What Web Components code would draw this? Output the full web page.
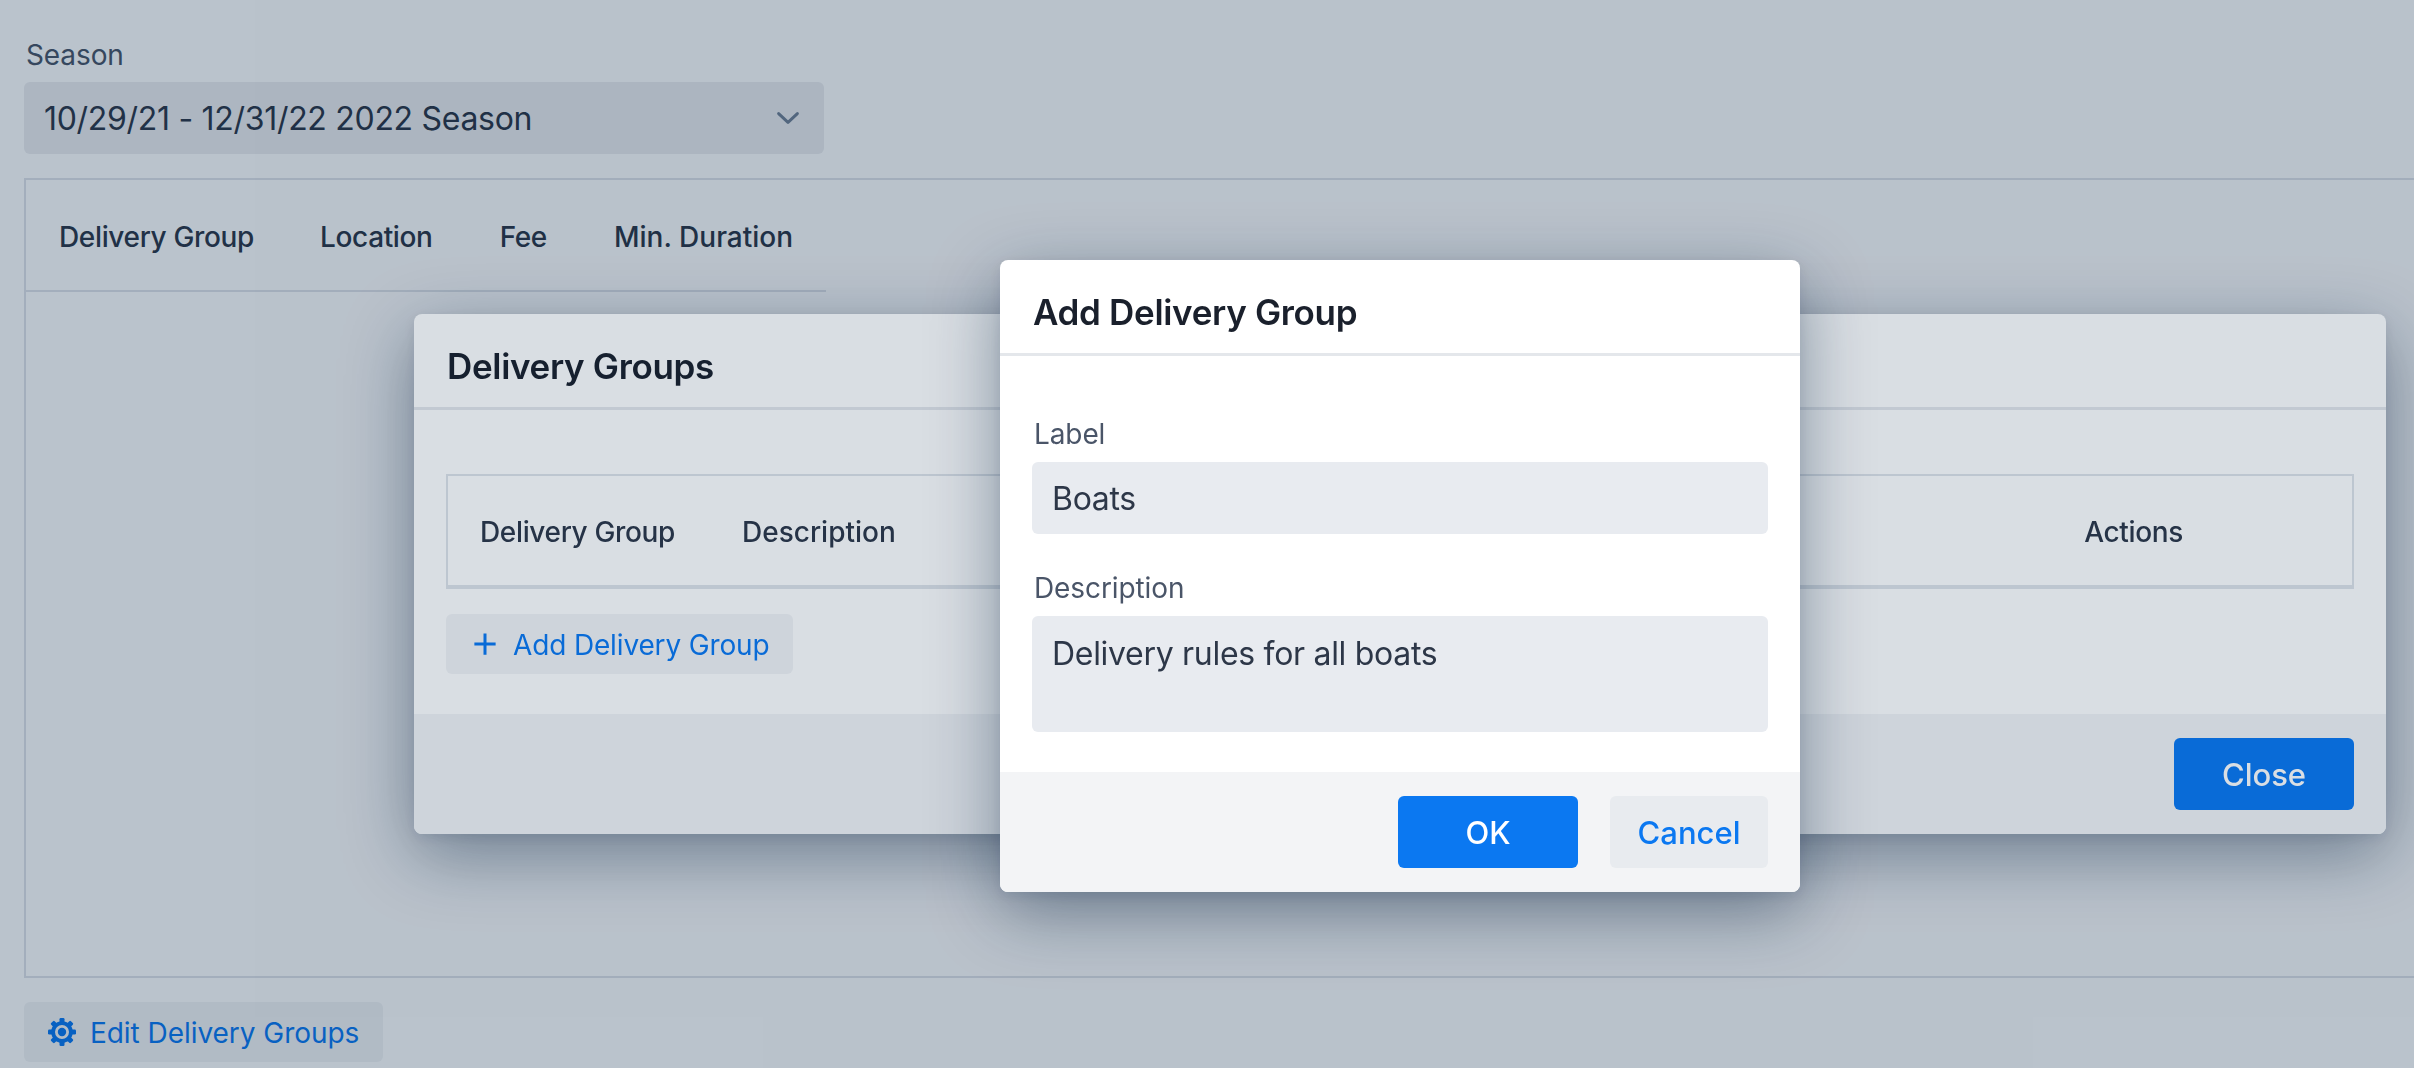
<!DOCTYPE html>
<html>
<head>
<meta charset="utf-8">
<title>Delivery Groups</title>
<style>
	html, body { margin: 0; height: 100%; background: #fff; overflow: hidden; }
	body { font-family: Inter, "Noto Sans", sans-serif; color: #2d3748; }
</style>
</head>
<body>
<season-page>
	<field-select slot="select" label="Season" value="10/29/21 - 12/31/22 2022 Season"></field-select>
	<data-table slot="table">
		<span>Delivery Group</span><span>Location</span><span>Fee</span><span>Min. Duration</span>
	</data-table>
	<action-button slot="edit" icon="cog">Edit Delivery Groups</action-button>
</season-page>

<modal-layer>
	<modal-box heading="Delivery Groups" style="--w:1972px;--top:314px;--gap:64px;">
		<group-list>
			<action-button slot="add" icon="plus">Add Delivery Group</action-button>
		</group-list>
		<solid-button slot="footer" kind="primary">Close</solid-button>
	</modal-box>
</modal-layer>

<modal-layer>
	<modal-box heading="Add Delivery Group" style="--w:800px;--top:260px;--gap:59px;">
		<text-field label="Label" value="Boats"></text-field>
		<text-field label="Description" value="Delivery rules for all boats" multi></text-field>
		<solid-button slot="footer" kind="primary">OK</solid-button>
		<solid-button slot="footer" kind="ghost">Cancel</solid-button>
	</modal-box>
</modal-layer>

<script>
const teeth = [0, 45, 90, 135, 180, 225, 270, 315]
	.map((a) => `<rect x="11.5" y="0" width="5" height="6" rx="1.2" transform="rotate(${a} 14 14)"/>`)
	.join("");

const ICONS = {
	chevron: `<svg viewBox="0 0 24 24" width="30" height="30" fill="none" stroke="currentColor" stroke-width="2.4" stroke-linecap="round" stroke-linejoin="round"><path d="M4.5 8.5l7.5 7 7.5-7"/></svg>`,
	plus: `<svg viewBox="0 0 24 24" width="30" height="30" fill="none" stroke="currentColor" stroke-width="2.4"><path d="M12 3.5v17M3.5 12h17"/></svg>`,
	cog: `<svg viewBox="0 0 28 28" width="28" height="28" fill="currentColor">${teeth}<circle cx="14" cy="14" r="8.9" fill="none" stroke="currentColor" stroke-width="3.8"/><circle cx="14" cy="14" r="4.2"/></svg>`,
};

class SeasonPage extends HTMLElement {
	constructor() {
		super();
		this.attachShadow({ mode: "open" });
		this.shadowRoot.innerHTML = `
			<style>
				:host { display: flex; flex-direction: column; height: 1068px; box-sizing: border-box; padding: 36px 0 6px 24px; }
				.frame {
					flex: 1;
					margin: 24px 0;
					border: 2px solid #dfe3e9;
					border-right: none;
				}
			</style>
			<slot name="select"></slot>
			<div class="frame"><slot name="table"></slot></div>
			<slot name="edit"></slot>
		`;
	}
}
customElements.define("season-page", SeasonPage);

class FieldSelect extends HTMLElement {
	constructor() {
		super();
		this.attachShadow({ mode: "open" });
		this.shadowRoot.innerHTML = `
			<style>
				:host { display: block; width: 800px; }
				label { display: block; font-size: 28px; line-height: 39px; color: #4a5568; margin: 0 0 7px 2px; letter-spacing: -0.1px; }
				.box {
					display: flex; align-items: center; justify-content: space-between;
					height: 72px; padding: 0 21px 0 20px; box-sizing: border-box;
					background: #edeef0; border-radius: 6px;
					font-size: 32px; letter-spacing: -0.3px; color: #2d3748;
				}
				.box i { display: flex; color: #718096; }
			</style>
			<label></label>
			<div class="box"><span></span><i>${ICONS.chevron}</i></div>
		`;
		this.shadowRoot.querySelector("label").textContent = this.getAttribute("label");
		this.shadowRoot.querySelector("span").textContent = this.getAttribute("value");
	}
}
customElements.define("field-select", FieldSelect);

class DataTable extends HTMLElement {
	constructor() {
		super();
		this.attachShadow({ mode: "open" });
		this.shadowRoot.innerHTML = `
			<style>
				:host {
					display: flex; width: 800px; height: 112px; box-sizing: border-box;
					align-items: center; gap: 66px; padding: 3px 0 0 33px;
					border-bottom: 2px solid #dfe3e9;
					font-size: 28px; font-weight: 500; letter-spacing: -0.35px; color: #2d3748;
				}
				::slotted(:nth-child(3)) { margin-left: 1px; }
				::slotted(:last-child) { letter-spacing: 0; margin-left: 1px; }
			</style>
			<slot></slot>
		`;
	}
}
customElements.define("data-table", DataTable);

class ActionButton extends HTMLElement {
	constructor() {
		super();
		this.attachShadow({ mode: "open" });
		const icon = ICONS[this.getAttribute("icon")] || "";
		this.shadowRoot.innerHTML = `
			<style>
				:host {
					display: inline-flex; align-items: center; align-self: flex-start; gap: 14px;
					height: 60px; padding: 0 24px; box-sizing: border-box;
					background: #f3f4f6; border-radius: 6px;
					font-size: 28px; font-weight: 400; letter-spacing: -0.05px; color: #0b78f1;
				}
				:host([icon="plus"]) { gap: 13px; letter-spacing: -0.15px; }
				i { display: flex; }
				span { padding-top: 2px; }
			</style>
			<i>${icon}</i><span><slot></slot></span>
		`;
	}
}
customElements.define("action-button", ActionButton);

class ModalLayer extends HTMLElement {
	constructor() {
		super();
		this.attachShadow({ mode: "open" });
		this.shadowRoot.innerHTML = `
			<style>
				:host {
					position: fixed; inset: 0;
					display: flex; justify-content: center; align-items: flex-start;
					box-sizing: border-box; padding-left: 386px;
					background: rgba(2, 35, 68, 0.15);
				}
			</style>
			<slot></slot>
		`;
	}
}
customElements.define("modal-layer", ModalLayer);

class ModalBox extends HTMLElement {
	constructor() {
		super();
		this.attachShadow({ mode: "open" });
		this.shadowRoot.innerHTML = `
			<style>
				:host {
					display: block; width: var(--w); margin-top: var(--top);
					background: #fff; border-radius: 8px; overflow: hidden;
					box-shadow: 0 20px 70px rgba(2, 30, 60, 0.42), 0 4px 12px rgba(2, 30, 60, 0.08);
				}
				header {
					height: 96px; box-sizing: border-box; padding: 11px 0 0 33px;
					display: flex; align-items: center;
					border-bottom: 3px solid #e4e7eb;
					font-size: 35px; font-weight: 600; letter-spacing: -0.33px; color: #1a202c;
				}
				main { display: flex; flex-direction: column; padding: var(--gap) 32px 40px; }
				footer {
					display: flex; justify-content: flex-end; gap: 32px;
					padding: 24px 32px; background: #f3f4f6;
				}
			</style>
			<header></header>
			<main><slot></slot></main>
			<footer><slot name="footer"></slot></footer>
		`;
		this.shadowRoot.querySelector("header").textContent = this.getAttribute("heading");
	}
}
customElements.define("modal-box", ModalBox);

class GroupList extends HTMLElement {
	constructor() {
		super();
		this.attachShadow({ mode: "open" });
		this.shadowRoot.innerHTML = `
			<style>
				:host { display: flex; flex-direction: column; align-items: flex-start; gap: 25px; }
				.head {
					display: flex; align-items: center; align-self: stretch;
					height: 115px; box-sizing: border-box; padding-top: 3px;
					border: 2px solid #dfe3e9; border-bottom-width: 4px;
					font-size: 28px; font-weight: 500; letter-spacing: -0.35px; color: #2d3748;
				}
				.a { margin-left: 32px; }
				.b { margin-left: 67px; letter-spacing: 0; }
				.c { margin-left: auto; margin-right: 169px; }
			</style>
			<div class="head"><span class="a">Delivery Group</span><span class="b">Description</span><span class="c">Actions</span></div>
			<slot name="add"></slot>
		`;
	}
}
customElements.define("group-list", GroupList);

class TextField extends HTMLElement {
	constructor() {
		super();
		this.attachShadow({ mode: "open" });
		this.shadowRoot.innerHTML = `
			<style>
				:host { display: block; margin-bottom: 35px; }
				:host([multi]) { margin-bottom: 0; }
				label { display: block; height: 47px; font-size: 28px; line-height: 39px; letter-spacing: -0.1px; color: #4a5568; margin-left: 2px; }
				.box {
					height: 72px; padding: 0 20px; box-sizing: border-box;
					display: flex; align-items: center;
					background: #e8ebf0; border-radius: 6px;
					font-size: 32px; letter-spacing: -0.3px; color: #2d3748;
				}
				:host([multi]) .box { height: 116px; align-items: flex-start; padding-top: 18px; }
			</style>
			<label></label>
			<div class="box"></div>
		`;
		this.shadowRoot.querySelector("label").textContent = this.getAttribute("label");
		this.shadowRoot.querySelector(".box").textContent = this.getAttribute("value");
	}
}
customElements.define("text-field", TextField);

class SolidButton extends HTMLElement {
	constructor() {
		super();
		this.attachShadow({ mode: "open" });
		this.shadowRoot.innerHTML = `
			<style>
				:host {
					display: flex; align-items: center; justify-content: center;
					height: 72px; box-sizing: border-box; border-radius: 6px;
					font-size: 31px; font-weight: 500;
				}
				:host([kind="primary"]) { width: 180px; background: #0b78f1; color: #fff; }
				:host([kind="ghost"]) { width: 158px; background: #e8ebef; color: #0b78f1; }
			</style>
			<slot></slot>
		`;
	}
}
customElements.define("solid-button", SolidButton);
</script>
</body>
</html>
